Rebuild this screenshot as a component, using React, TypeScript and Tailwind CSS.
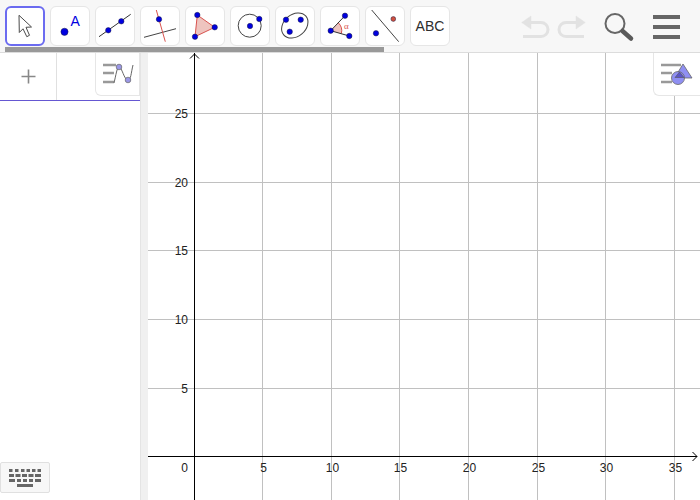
const BLUE = '#0000e0'
const RED = '#d9534f'

function Dot({ x, y, fill = BLUE, r = 2.7 }: { x: number; y: number; fill?: string; r?: number }) {
  return <circle cx={x} cy={y} r={r} fill={fill} stroke="#1a1a40" strokeWidth="0.5" />
}

function ToolButton({ selected, children }: { selected?: boolean; children: React.ReactNode }) {
  return (
    <div
      className={
        selected
          ? 'flex h-10 w-10 items-center justify-center rounded-[6px] border-2 border-[#6b6bf0] bg-white'
          : 'flex h-10 w-10 items-center justify-center rounded-[6px] border border-[#e6e6e6] bg-white'
      }
    >
      {children}
    </div>
  )
}

function Icon({ children }: { children: React.ReactNode }) {
  return (
    <svg width="40" height="40" viewBox="0 0 40 40" className="shrink-0">
      {children}
    </svg>
  )
}

const tools = [
  // move
  <svg key="move" width="36" height="36" viewBox="2 2 36 36">
    <path d="M14 9.3 L26.5 21 L21 21.3 L24.5 29.3 L21.8 30.7 L18 22.8 L14.3 26.5 Z" fill="#fff" stroke="#4a4a4a" strokeWidth="1" strokeLinejoin="round" />
  </svg>,
  // point
  <Icon key="point">
    <circle cx="14.5" cy="25.8" r="3.6" fill={BLUE} stroke="#1a1a40" strokeWidth="0.5" />
    <text x="20.5" y="19.5" fontFamily="Liberation Sans, sans-serif" fontSize="14" fill={BLUE}>A</text>
  </Icon>,
  // line
  <Icon key="line">
    <line x1="4" y1="30.7" x2="35.7" y2="8.3" stroke="#333" strokeWidth="1" />
    <Dot x={13.3} y={24.3} />
    <Dot x={26.3} y={15.3} />
  </Icon>,
  // perpendicular
  <Icon key="perp">
    <line x1="4" y1="31.3" x2="36" y2="22.7" stroke="#444" strokeWidth="1" />
    <line x1="16.3" y1="4" x2="25.3" y2="35.7" stroke={RED} strokeWidth="1" />
    <Dot x={19} y={13.3} />
  </Icon>,
  // polygon
  <Icon key="poly">
    <path d="M12.3 9 L29.7 21.3 L10 30.7 Z" fill="#eec4bf" stroke={RED} strokeWidth="1" />
    <Dot x={12.3} y={9} />
    <Dot x={29.7} y={21.3} />
    <Dot x={10} y={30.7} />
  </Icon>,
  // circle
  <Icon key="circle">
    <circle cx="19.7" cy="19.7" r="11.5" fill="none" stroke="#444" strokeWidth="1" />
    <Dot x={20} y={20} />
    <Dot x={29.3} y={13} />
  </Icon>,
  // ellipse
  <Icon key="ellipse">
    <ellipse cx="19.8" cy="19.5" rx="14.5" ry="11" transform="rotate(-40 19.8 19.5)" fill="none" stroke="#444" strokeWidth="1" />
    <Dot x={11} y={13.7} />
    <Dot x={25.7} y={13.7} />
    <Dot x={14.7} y={25.7} />
  </Icon>,
  // angle
  <Icon key="angle">
    <path d="M10.7 24.7 L18.3 16.8 A 11 11 0 0 1 21.3 27.7 Z" fill="#eec4bf" stroke="none" />
    <path d="M18.3 16.8 A 11 11 0 0 1 21.3 27.7" fill="none" stroke={RED} strokeWidth="1" />
    <path d="M25 9.7 L10.7 24.7 L29.3 30" fill="none" stroke="#333" strokeWidth="1" />
    <Dot x={25} y={9.7} />
    <Dot x={10.7} y={24.7} />
    <Dot x={29.3} y={30} />
    <text x="24" y="23" fontFamily="Liberation Serif, serif" fontSize="9" fill={RED}>α</text>
  </Icon>,
  // reflect
  <Icon key="reflect">
    <line x1="6.7" y1="4" x2="33.7" y2="35.7" stroke="#444" strokeWidth="1" />
    <Dot x={28.3} y={13} fill="#d0503f" r={2.4} />
    <Dot x={11} y={27.3} />
  </Icon>,
]

function PlaneGrid() {
  const xs = [262.5, 331.5, 399.5, 468.5, 537.5, 605.5, 674.5]
  const ys = [113.5, 182.5, 250.5, 319.5, 388.5]
  const labels = { x: [5, 10, 15, 20, 25, 30, 35], y: [25, 20, 15, 10, 5] }
  const font = 'Liberation Sans, sans-serif'
  return (
    <svg width="552" height="447" viewBox="148 53 552 447" className="block">
      {xs.map((x) => (
        <line key={x} x1={x} y1="53" x2={x} y2="500" stroke="#c0c0c0" strokeWidth="1" />
      ))}
      {ys.map((y) => (
        <line key={y} x1="148" y1={y} x2="700" y2={y} stroke="#c0c0c0" strokeWidth="1" />
      ))}
      <line x1="194.5" y1="53" x2="194.5" y2="500" stroke="#000" strokeWidth="1" />
      <line x1="148" y1="456.5" x2="697" y2="456.5" stroke="#000" strokeWidth="1" />
      <path d="M190 58.5 L194.5 54 L199 58.5" fill="none" stroke="#000" strokeWidth="1" />
      <path d="M692.5 452 L697 456.5 L692.5 461" fill="none" stroke="#000" strokeWidth="1" />
      {labels.x.map((n, i) => (
        <text key={n} x={xs[i] + 1} y="472" textAnchor="middle" fontFamily={font} fontSize="12" fill="#222">{n}</text>
      ))}
      {labels.y.map((n, i) => (
        <text key={n} x="188" y={ys[i] + 4.5} textAnchor="end" fontFamily={font} fontSize="12" fill="#222">{n}</text>
      ))}
      <text x="188" y="472" textAnchor="end" fontFamily={font} fontSize="12" fill="#222">0</text>
    </svg>
  )
}

export default function App() {
  return (
    <div className="relative flex h-[500px] w-[700px] flex-col overflow-hidden bg-white font-['Liberation_Sans',sans-serif]">
      {/* toolbar */}
      <div className="relative flex h-[53px] shrink-0 border-b border-[#dcdcdc] bg-[#f7f7f7] pt-1.5 pl-[5px]">
        <div className="flex gap-[5px]">
          <ToolButton selected>{tools[0]}</ToolButton>
          {tools.slice(1).map((t, i) => (
            <ToolButton key={i}>{t}</ToolButton>
          ))}
          <ToolButton>
            <span className="text-sm text-[#2d2d2d]">ABC</span>
          </ToolButton>
        </div>
        <div className="absolute bottom-0 left-[5px] h-[5px] w-[379px] bg-[#999999]" />
        {/* undo, redo, search, menu */}
        <div className="absolute top-3 left-[521px] flex items-start">
          <svg width="65" height="30" viewBox="0 0 65 30">
            <g fill="#e2e2e2" stroke="#e2e2e2">
              <path d="M9 10.5 H20 A7 7 0 0 1 20 24.5 H2" fill="none" strokeWidth="3" />
              <path d="M0.7 10.5 L10 4 V17 Z" strokeWidth="0.5" />
            </g>
            <g fill="#e2e2e2" stroke="#e2e2e2" transform="matrix(-1 0 0 1 65 0)">
              <path d="M9 10.5 H20 A7 7 0 0 1 20 24.5 H2" fill="none" strokeWidth="3" />
              <path d="M0.7 10.5 L10 4 V17 Z" strokeWidth="0.5" />
            </g>
          </svg>
          <svg width="34" height="32" viewBox="0 0 34 32" className="-mt-[1px] ml-[17px]">
            <circle cx="12" cy="12.5" r="9.5" fill="none" stroke="#666" strokeWidth="2" />
            <line x1="19.5" y1="20" x2="28" y2="27.5" stroke="#5a5a5a" strokeWidth="4.5" strokeLinecap="round" />
          </svg>
          <div className="mt-[3px] ml-[16px] flex w-[27px] flex-col gap-[6.5px]">
            <div className="h-[3.5px] bg-[#666]" />
            <div className="h-[3.5px] bg-[#666]" />
            <div className="h-[3.5px] bg-[#666]" />
          </div>
        </div>
      </div>

      <div className="flex min-h-0 flex-1">
        {/* algebra panel */}
        <div className="relative w-[140px] shrink-0">
          <div className="flex h-12 border-b border-[#6557d2]">
            <div className="flex w-[57px] items-center justify-center border-r border-[#e0e0e0]">
              <svg width="15" height="15" viewBox="0 0 15 15">
                <path d="M7.5 0.5 V14.5 M0.5 7.5 H14.5" stroke="#888" strokeWidth="1.6" />
              </svg>
            </div>
          </div>
          <div className="absolute top-0 right-0 flex h-[43px] w-[45px] items-center justify-center rounded-bl-[6px] border-r border-b border-l border-[#e6e6e6] bg-white">
            <svg width="34" height="26" viewBox="0 0 34 26">
              <path d="M2 4 H15 M2 12 H13 M2 21 H13" stroke="#999" strokeWidth="2.4" />
              <path d="M13 22 C 15 14 16 6 18 6 C 21 6 23 19 27 19 C 30 19 30 12 32 4" fill="none" stroke="#666" strokeWidth="1" />
              <circle cx="18" cy="6" r="2.8" fill="#9a97e6" stroke="#666" strokeWidth="0.7" />
              <circle cx="27" cy="19" r="2.8" fill="#9a97e6" stroke="#666" strokeWidth="0.7" />
            </svg>
          </div>
          <div className="absolute bottom-[7px] left-0 flex h-[31px] w-[50px] items-center justify-center rounded-[2px] border border-[#e0e0e0] bg-[#f7f7f7]">
            <svg width="32" height="18" viewBox="0 0 32 18" fill="#666">
              <path d="M0 0h3.5v3H0zM6 0h3.5v3H6zM12 0h3.5v3H12zM17.5 0h3.5v3h-3.5zM23 0h3.5v3H23zM28.5 0h3.5v3h-3.5z" />
              <path d="M0 5h5v3H0zM6.5 5h5v3h-5zM13 5h5v3h-5zM19.5 5h5v3h-5zM26 5h6v3h-6z" />
              <path d="M0 10h6v3H0zM8 10h4v3H8zM14 10h4v3h-4zM20 10h4v3h-4zM26 10h6v3h-6z" />
              <path d="M8 15h16v3H8z" />
            </svg>
          </div>
        </div>

        {/* splitter */}
        <div className="w-2 shrink-0 border-l border-[#e4e4e4] bg-[#f0f0f0]" />

        {/* graphics view */}
        <div className="relative min-w-0 flex-1">
          <PlaneGrid />
          <div className="absolute top-0 right-0 flex h-[43px] w-[47px] items-center justify-center rounded-bl-[6px] border-b border-l border-[#e6e6e6] bg-white">
            <svg width="34" height="26" viewBox="0 0 34 26">
              <path d="M1 4 H21 M1 12 H12 M1 21 H12" stroke="#999" strokeWidth="2.4" />
              <path d="M23 3 L32 17 H14.5 Z" fill="#8f8ff2" stroke="#666" strokeWidth="0.8" />
              <circle cx="18" cy="17" r="6.5" fill="#8f8ff2" stroke="#666" strokeWidth="0.8" />
              <path d="M19.5 11 L24 16.5 H15 Z" fill="#5b55c8" stroke="#555" strokeWidth="0.6" />
            </svg>
          </div>
        </div>
      </div>
    </div>
  )
}
